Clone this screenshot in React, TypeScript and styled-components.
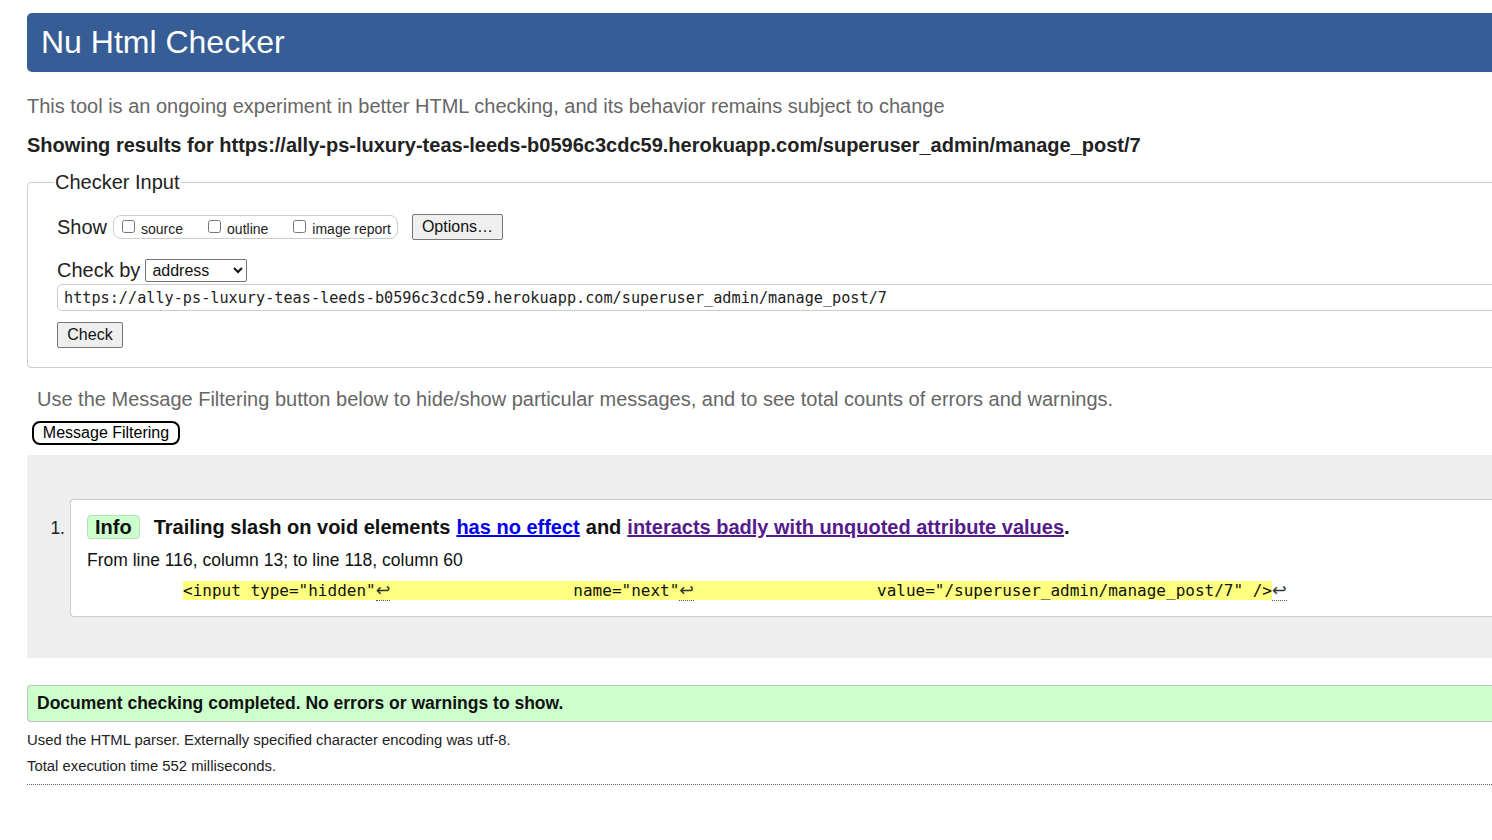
import React from "react";
import styled, { createGlobalStyle } from "styled-components";

const Global = createGlobalStyle`
  html, body { margin: 0; padding: 0; overflow: hidden; background: #fff; }
  body { font-family: "Liberation Sans", Arial, sans-serif; color: #222; }
  * { box-sizing: border-box; }
`;

const Page = styled.div`
  width: 1640px;
  padding: 13px 0 40px 27px;
`;

const Header = styled.h1`
  margin: 0;
  height: 59px;
  line-height: 59px;
  padding-left: 14px;
  background: #365d95;
  color: #fff;
  font-size: 32px;
  font-weight: normal;
  border-radius: 5px;
`;

const Intro = styled.p`
  margin: 22px 0 0;
  font-size: 20px;
  line-height: 24px;
  color: #666;
`;

const ResultsFor = styled.p`
  margin: 15px 0 0;
  font-size: 20px;
  line-height: 24px;
  font-weight: bold;
  color: #222;
`;

const Fieldset = styled.fieldset`
  margin: 13px 0 0;
  border: 1px solid #ccc;
  border-radius: 4px;
  padding: 20px 29px 19px 29px;
  min-inline-size: 0;
`;

const Legend = styled.legend`
  font-size: 20px;
  line-height: 24px;
  padding: 0 1px;
  margin-left: -3px;
  color: #222;
`;

const Row = styled.div<{ $top?: number }>`
  display: flex;
  align-items: center;
  margin-top: ${(p) => p.$top ?? 0}px;
`;

const Label = styled.span`
  font-size: 20px;
  line-height: 24px;
  color: #222;
`;

const CheckGroup = styled.div`
  display: flex;
  align-items: center;
  height: 24px;
  margin-left: 6px;
  padding: 0 6px 0 8px;
  border: 1px solid #ccc;
  border-radius: 8px;
`;

const Option = styled.label<{ $gap?: number }>`
  display: flex;
  align-items: center;
  font-size: 14px;
  line-height: 16px;
  color: #222;
  margin-right: ${(p) => p.$gap ?? 0}px;
  padding-top: 3px;
`;

const Box = styled.input`
  width: 13px;
  height: 13px;
  margin: 0 6px 5px 0;
`;

const Button = styled.button<{ $left?: number }>`
  font-family: "Liberation Sans", Arial, sans-serif;
  font-size: 16px;
  line-height: 18px;
  height: 26px;
  padding: 0 9px;
  margin-left: ${(p) => p.$left ?? 0}px;
  background: #efefef;
  color: #111;
  border: 1px solid #767676;
  border-radius: 2px;
`;

const Select = styled.select`
  margin-left: 5px;
  width: 102px;
  height: 23px;
  font-family: "Liberation Sans", Arial, sans-serif;
  font-size: 16px;
  color: #111;
  background: #fff;
  border: 1px solid #767676;
  border-radius: 2px;
  padding: 0 2px;
`;

const UrlInput = styled.input`
  display: block;
  margin-top: 2px;
  width: 100%;
  height: 27px;
  padding: 0 6px;
  border: 1px solid #ccc;
  border-radius: 5px;
  font-family: "DejaVu Sans Mono", "Liberation Mono", monospace;
  font-size: 15.2px;
  color: #222;
`;

const CheckButton = styled(Button)`
  display: block;
  margin-top: 11px;
  width: 66px;
  padding: 0;
`;

const FilterNote = styled.p`
  margin: 19px 0 0;
  padding-left: 10px;
  font-size: 20px;
  line-height: 24px;
  color: #666;
`;

const FilterButton = styled.button`
  display: block;
  margin: 10px 0 0 5px;
  height: 24px;
  width: 148px;
  padding: 0;
  font-family: "Liberation Sans", Arial, sans-serif;
  font-size: 16px;
  color: #000;
  background: #fff;
  border: 2px solid #000;
  border-radius: 8px;
`;

const Results = styled.div`
  margin-top: 10px;
  background: #eee;
  padding: 44px 0 41px;
`;

const Item = styled.div`
  display: flex;
  align-items: flex-start;
`;

const Num = styled.span`
  width: 38px;
  padding-top: 19px;
  text-align: right;
  font-size: 17.5px;
  line-height: 20px;
  color: #222;
`;

const Message = styled.div`
  flex: 1;
  margin-left: 5px;
  background: #fff;
  border: 1px solid #ccc;
  border-right: none;
  border-radius: 4px 0 0 4px;
  padding: 15px 0 15px 16px;
`;

const Title = styled.p`
  display: flex;
  align-items: center;
  margin: 0;
  font-size: 20px;
  line-height: 24px;
  font-weight: bold;
  color: #111;
`;

const Badge = styled.span`
  display: inline-block;
  height: 24px;
  line-height: 22px;
  padding: 0 7px;
  margin-right: 14px;
  background: #cfc;
  border: 1px solid #b5dfb5;
  border-radius: 4px;
  color: #111;
`;

const Link = styled.a<{ $visited?: boolean }>`
  color: ${(p) => (p.$visited ? "#551a8b" : "#0000ee")};
  text-decoration: underline;
  margin: 0 6px;
`;

const Period = styled.span`
  margin-left: -6px;
`;

const Location = styled.p`
  margin: 10px 0 0;
  font-size: 17.5px;
  line-height: 22px;
  color: #111;
`;

const Code = styled.p`
  margin: 10px 0 0 96px;
  font-family: "DejaVu Sans Mono", "Liberation Mono", monospace;
  font-size: 16px;
  line-height: 20px;
  white-space: pre;
  color: #111;
`;

const Mark = styled.mark`
  background: #ffff80;
  color: #111;
`;

const Lf = styled.b`
  font-family: "DejaVu Sans", sans-serif;
  font-size: 17.5px;
  line-height: 18px;
  font-weight: normal;
  color: #333;
  border-bottom: 1px dotted #555;
`;

const Success = styled.p`
  margin: 27px 0 0;
  height: 37px;
  line-height: 35px;
  padding-left: 9px;
  background: #cfc;
  border: 1px solid #c2c2c2;
  border-right: none;
  border-radius: 4px 0 0 4px;
  font-size: 17.5px;
  font-weight: bold;
  color: #111;
`;

const Detail = styled.p<{ $top: number }>`
  margin: ${(p) => p.$top}px 0 0;
  font-size: 14.85px;
  line-height: 18px;
  color: #222;
`;

const Rule = styled.hr`
  margin: 9px 0 0;
  border: none;
  border-top: 1px dotted #666;
  height: 0;
`;

const URL =
  "https://ally-ps-luxury-teas-leeds-b0596c3cdc59.herokuapp.com/superuser_admin/manage_post/7";

const SP = " ".repeat(19);

export default function App() {
  return (
    <>
      <Global />
      <Page>
        <Header>Nu Html Checker</Header>
        <Intro>
          This tool is an ongoing experiment in better HTML checking, and its behavior remains
          subject to change
        </Intro>
        <ResultsFor>Showing results for {URL}</ResultsFor>

        <Fieldset>
          <Legend>Checker Input</Legend>
          <Row>
            <Label>Show</Label>
            <CheckGroup>
              <Option $gap={25}>
                <Box type="checkbox" />
                source
              </Option>
              <Option $gap={25}>
                <Box type="checkbox" />
                outline
              </Option>
              <Option>
                <Box type="checkbox" />
                image report
              </Option>
            </CheckGroup>
            <Button $left={14}>Options…</Button>
          </Row>
          <Row $top={18}>
            <Label>Check by</Label>
            <Select defaultValue="address">
              <option value="address">address</option>
              <option value="file">file upload</option>
              <option value="text">text input</option>
            </Select>
          </Row>
          <UrlInput type="text" defaultValue={URL} readOnly />
          <CheckButton>Check</CheckButton>
        </Fieldset>

        <FilterNote>
          Use the Message Filtering button below to hide/show particular messages, and to see
          total counts of errors and warnings.
        </FilterNote>
        <FilterButton>Message Filtering</FilterButton>

        <Results>
          <Item>
            <Num>1.</Num>
            <Message>
              <Title>
                <Badge>Info</Badge>
                Trailing slash on void elements
                <Link href="#">has no effect</Link>
                and
                <Link href="#" $visited>
                  interacts badly with unquoted attribute values
                </Link>
                <Period>.</Period>
              </Title>
              <Location>From line 116, column 13; to line 118, column 60</Location>
              <Code>
                <Mark>
                  {'<input type="hidden"'}
                  <Lf title="Line break">↩</Lf>
                  {SP + 'name="next"'}
                  <Lf title="Line break">↩</Lf>
                  {SP + 'value="/superuser_admin/manage_post/7" />'}
                </Mark>
                <Lf title="Line break">↩</Lf>
              </Code>
            </Message>
          </Item>
        </Results>

        <Success>Document checking completed. No errors or warnings to show.</Success>
        <Detail $top={9}>Used the HTML parser. Externally specified character encoding was utf-8.</Detail>
        <Detail $top={8}>Total execution time 552 milliseconds.</Detail>
        <Rule />
      </Page>
    </>
  );
}
